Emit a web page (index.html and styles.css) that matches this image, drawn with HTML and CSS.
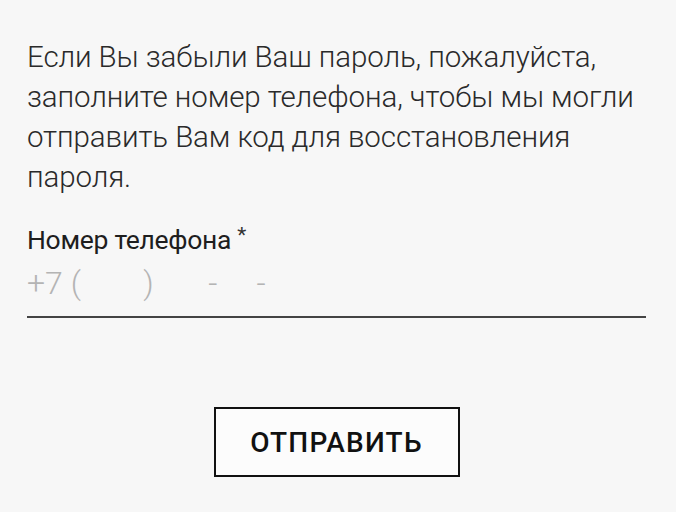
FILE: index.html
```html
<!DOCTYPE html>
<html lang="ru">
<head>
    <meta charset="UTF-8">
    <meta name="viewport" content="width=device-width, initial-scale=1.0">
    <title>Восстановление пароля</title>
    <link rel="stylesheet" href="styles.css">
</head>
<body>
    <div class="card">
        <p class="intro">Если Вы забыли Ваш пароль, пожалуйста, заполните номер телефона, чтобы мы могли отправить Вам код для восстановления пароля.</p>

        <div class="form-group">
            <label for="phone">Номер телефона<span class="req">*</span></label>
            <input type="tel" id="phone" placeholder="+7 (        )       -     -">
        </div>

        <div class="actions">
            <button type="button">ОТПРАВИТЬ</button>
        </div>
    </div>
</body>
</html>
```

FILE: styles.css
```css
body { margin: 0; background: #fff; font-family: Roboto, "Noto Sans", sans-serif; }
.card { width: 676px; height: 512px; box-sizing: border-box; background: #f7f7f7; padding: 37px 30px 0 27px; }
.intro { margin: 0; font-size: 29.5px; font-weight: 300; line-height: 40px; letter-spacing: -0.1px; color: #2a2a2a; }
.form-group { margin-top: 28px; width: 619px; }
label { display: block; font-size: 26.5px; line-height: 30px; letter-spacing: -0.3px; color: #1e1e1e; }
.req { display: inline-block; font-size: 21px; line-height: 20px; vertical-align: top; margin-left: 6px; color: #333; }
input { display: block; width: 100%; box-sizing: border-box; margin-top: 6px; padding: 4px 0 15px; border: none; border-bottom: 2px solid #444; background: transparent; font-family: Roboto, sans-serif; font-size: 32px; font-weight: 300; line-height: 36px; color: #333; outline: none; }
input::placeholder { color: #b4b4b4; }
.actions { display: flex; justify-content: center; width: 619px; margin-top: 89px; }
button { width: 246px; height: 70px; box-sizing: border-box; border: 2px solid #111; background: #fcfcfc; font-family: Roboto, sans-serif; font-size: 28px; font-weight: 500; letter-spacing: 1.2px; color: #111; cursor: pointer; }
```
